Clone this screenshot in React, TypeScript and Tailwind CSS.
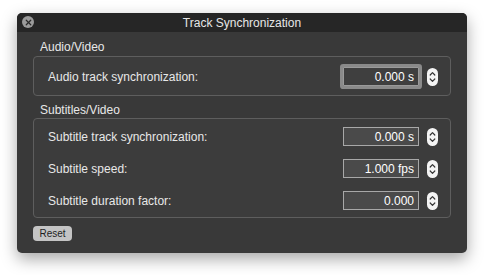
import { X } from 'lucide-react';

function Stepper() {
  return (
    <div className="ml-[8px] w-[11px] h-[18px] rounded-full bg-[#f4f4f4] flex items-center justify-center">
      <svg width="7" height="14" viewBox="0 0 7 14" fill="none" stroke="#333" strokeWidth="1.2" strokeLinecap="round" strokeLinejoin="round">
        <path d="M1.2 5 L3.5 2.7 L5.8 5" />
        <path d="M1.2 9 L3.5 11.3 L5.8 9" />
      </svg>
    </div>
  );
}

function Row({ label, value, focused }: { label: string; value: string; focused?: boolean }) {
  return (
    <div className="h-[19px] flex items-center">
      <span className="flex-1 text-[12px] text-[#e8e8e8]">{label}</span>
      <div
        className={
          focused
            ? 'w-[76px] h-[19px] bg-[#3f3f3f] border border-[#9a9a9a] rounded-[1px] shadow-[0_0_0_3px_#8a8a8a] flex items-center justify-end pr-[4px] text-[12px] text-white'
            : 'w-[76px] h-[19px] bg-[#4a4a4a] border border-[#a8a8a8] flex items-center justify-end pr-[4px] text-[12px] text-white'
        }
      >
        {value}
      </div>
      <Stepper />
    </div>
  );
}

export default function App() {
  return (
    <div className="w-[484px] h-[275px] bg-white pt-[13px] pl-[17px]" style={{ fontFamily: '"Liberation Sans", Arial, sans-serif' }}>
      <div className="w-[450px] h-[240px] bg-[#393939] rounded-[5px] overflow-hidden shadow-[0_6px_16px_rgba(0,0,0,0.35)] flex flex-col">
        <div className="relative h-[19px] bg-[#262626] flex items-center justify-center">
          <div className="absolute left-[5px] top-[3px] w-[12px] h-[12px] rounded-full bg-[#9b9b9b] flex items-center justify-center">
            <X size={9} strokeWidth={3.2} color="#2a2a2a" />
          </div>
          <span className="text-[12px] text-[#e6e6e6]">Track Synchronization</span>
        </div>

        <div className="px-[16px] flex flex-col">
          <div className="pl-[7px] mt-[8px] h-[14px] flex items-center text-[12px] text-[#e8e8e8]">Audio/Video</div>
          <div className="mt-[2px] h-[40px] border border-[#5e5e5e] rounded-[4px] bg-[#3c3c3c] pl-[14px] pr-[12px] pt-[10px]">
            <Row label="Audio track synchronization:" value="0.000 s" focused />
          </div>

          <div className="pl-[7px] mt-[7px] h-[14px] flex items-center text-[12px] text-[#e8e8e8]">Subtitles/Video</div>
          <div className="mt-[1px] h-[100px] border border-[#5e5e5e] rounded-[4px] bg-[#3c3c3c] pl-[14px] pr-[12px] pt-[8px] flex flex-col gap-[13px]">
            <Row label="Subtitle track synchronization:" value="0.000 s" />
            <Row label="Subtitle speed:" value="1.000 fps" />
            <Row label="Subtitle duration factor:" value="0.000" />
          </div>

          <div className="mt-[8px]">
            <button className="w-[39px] h-[15px] rounded-[4px] bg-[#c4c4c4] text-[10px] leading-none text-[#1e1e1e] flex items-center justify-center">
              Reset
            </button>
          </div>
        </div>
      </div>
    </div>
  );
}
